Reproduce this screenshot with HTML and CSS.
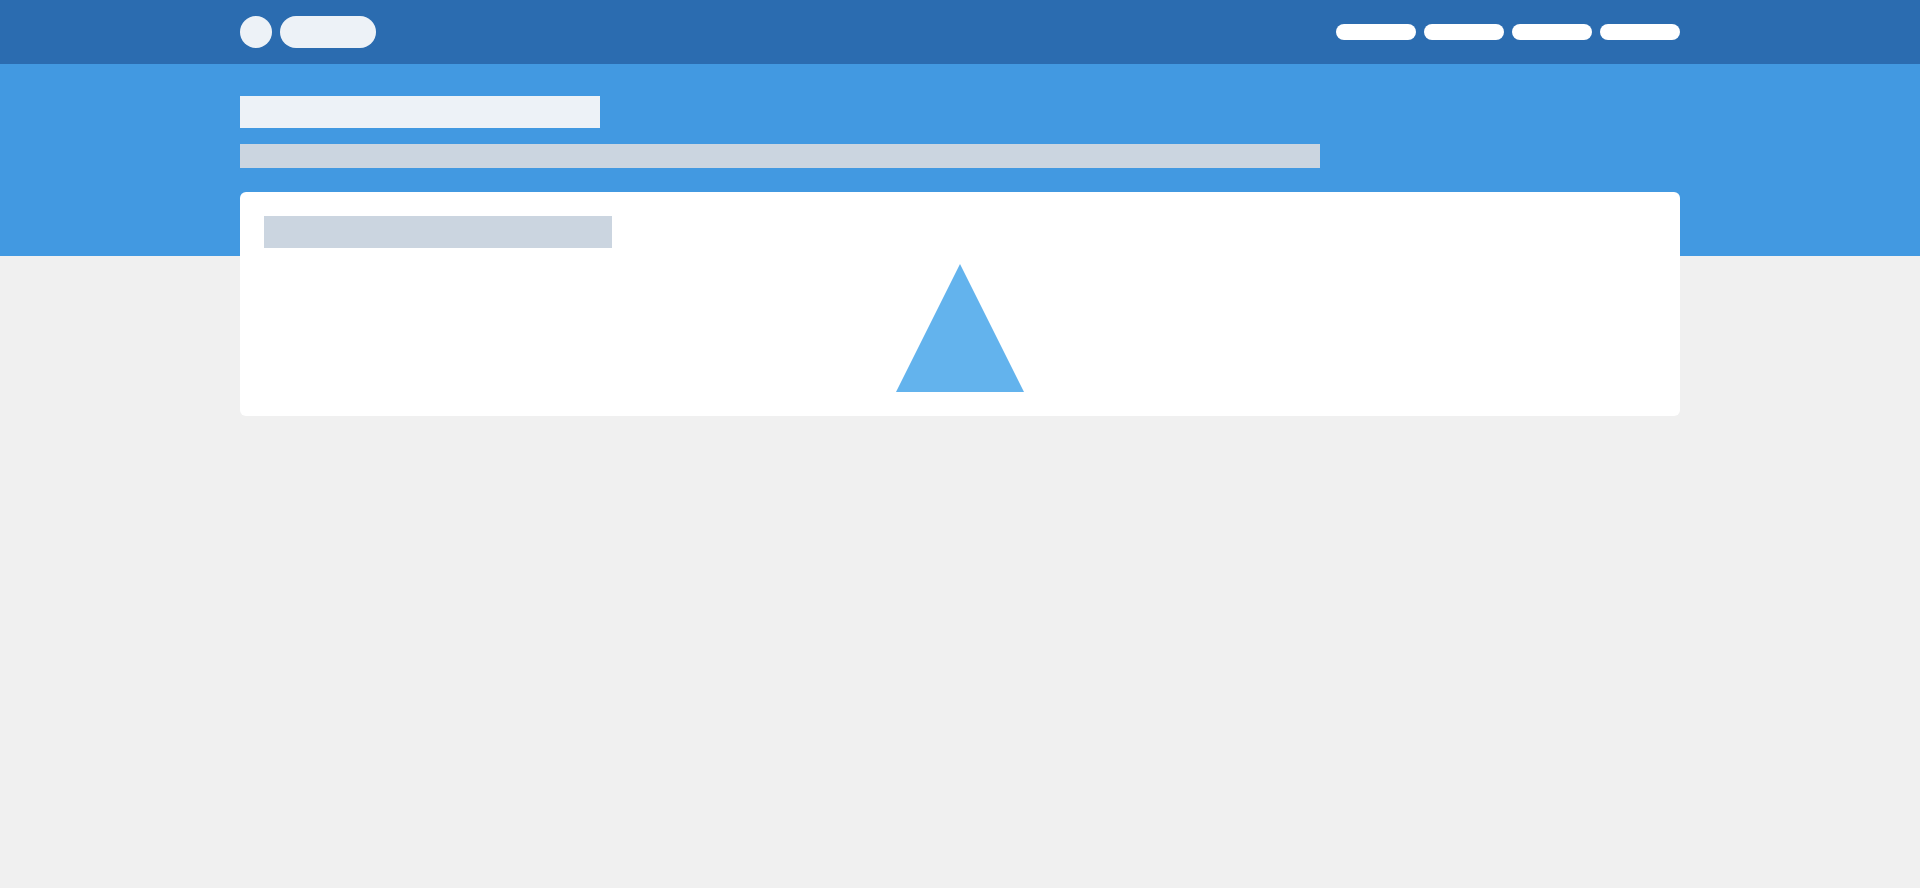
FILE: index.html
```html
<!DOCTYPE html>
<html lang="en">
<head>
<meta charset="utf-8">
<meta name="viewport" content="width=device-width, initial-scale=1">
<title>Loading</title>
<link rel="stylesheet" href="styles.css">
</head>
<body>
<header class="topbar">
  <div class="container topbar-row">
    <div class="brand">
      <span class="brand-mark"></span>
      <span class="brand-name"></span>
    </div>
    <nav class="nav">
      <span class="nav-item"></span>
      <span class="nav-item"></span>
      <span class="nav-item"></span>
      <span class="nav-item"></span>
    </nav>
  </div>
</header>
<section class="hero">
  <div class="container hero-content">
    <div class="hero-title"></div>
    <div class="hero-subtitle"></div>
  </div>
</section>
<main class="container main">
  <article class="card">
    <div class="card-title"></div>
    <svg class="card-figure" viewBox="0 0 128 128" aria-hidden="true"><path d="M64 0 128 128H0Z" fill="#63b3ed"/></svg>
  </article>
</main>
</body>
</html>
```

FILE: styles.css
```css
* {
  box-sizing: border-box;
}

body {
  margin: 0;
  background: #f0f0f0;
  font-family: "Liberation Sans", sans-serif;
}

.container {
  width: 75%;
  margin: 0 auto;
}

.topbar {
  padding: 16px 0;
  background: #2b6cb0;
}

.topbar-row {
  display: flex;
  align-items: center;
  justify-content: space-between;
}

.brand,
.nav {
  display: flex;
  gap: 8px;
}

.brand-mark,
.brand-name {
  width: 32px;
  height: 32px;
  border-radius: 16px;
  background: #edf2f7;
}

.brand-name {
  width: 96px;
}

.nav-item {
  width: 80px;
  height: 16px;
  border-radius: 8px;
  background: #fff;
}

.hero {
  padding: 32px 0 88px;
  background: #4299e1;
}

.hero-content {
  display: flex;
  flex-direction: column;
  gap: 16px;
}

.hero-title {
  width: 25%;
  height: 32px;
  background: #edf2f7;
}

.hero-subtitle {
  width: 75%;
  height: 24px;
  background: #cbd5e0;
}

.main {
  margin-top: -64px;
}

.card {
  display: flex;
  flex-direction: column;
  gap: 16px;
  padding: 24px;
  border-radius: 6px;
  background: #fff;
}

.card-title {
  width: 25%;
  height: 32px;
  background: #cbd5e0;
}

.card-figure {
  align-self: center;
  width: 128px;
  height: 128px;
}
```
